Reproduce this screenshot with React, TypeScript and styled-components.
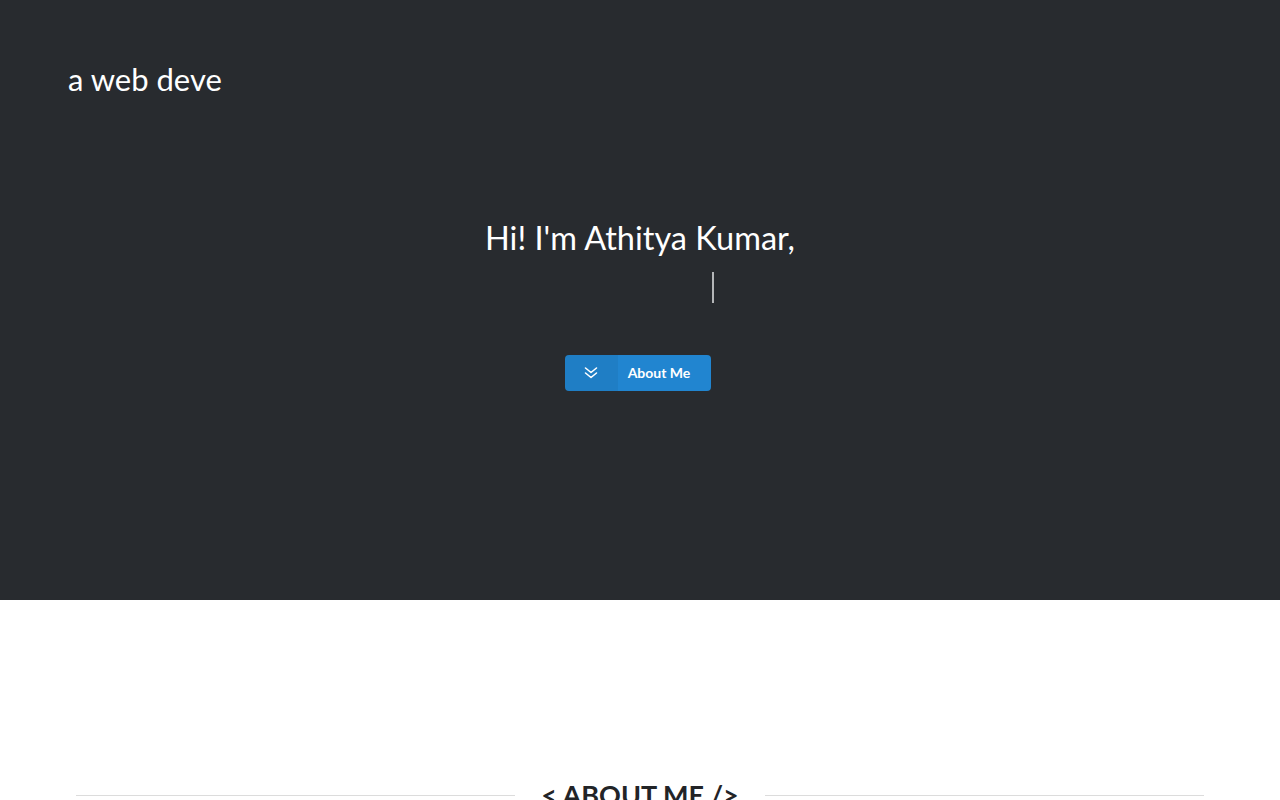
import React from 'react';
import styled, {createGlobalStyle} from 'styled-components';

const GlobalStyle = createGlobalStyle`
  html, body {
    margin: 0;
    padding: 0;
    background: #ffffff;
    font-family: Lato, "Helvetica Neue", Arial, sans-serif;
  }
`;

const Hero = styled.header`
  height: 600px;
  background: #282b2f;
  display: flex;
  flex-direction: column;
  color: #ffffff;
`;

const Brand = styled.div`
  padding: 59px 0 0 68px;
  font-size: 31px;
  line-height: 40px;
  font-weight: 400;
`;

const Intro = styled.div`
  margin-top: 117px;
  display: flex;
  flex-direction: column;
  align-items: center;
`;

const Greeting = styled.h1`
  margin: 0;
  font-size: 32.5px;
  font-weight: 400;
  line-height: 44px;
`;

const TypedLine = styled.div`
  height: 40px;
  margin-top: 7px;
  display: flex;
  justify-content: center;
  align-items: center;
`;

const Cursor = styled.span`
  display: block;
  width: 2px;
  height: 31px;
  margin-left: 146px;
  background: #b4b6b8;
`;

const AboutButton = styled.button`
  margin: 48px 4px 0 0;
  display: flex;
  align-items: stretch;
  height: 36px;
  padding: 0;
  border: none;
  border-radius: 4px;
  overflow: hidden;
  background: #2185d0;
  color: #ffffff;
  font-family: Lato, "Helvetica Neue", Arial, sans-serif;
  font-size: 14px;
  font-weight: 700;
  cursor: pointer;
`;

const ButtonIcon = styled.span`
  width: 53px;
  display: flex;
  align-items: center;
  justify-content: center;
  background: rgba(0, 0, 0, 0.05);
`;

const ButtonLabel = styled.span`
  display: flex;
  align-items: center;
  padding: 0 21px 2px 10px;
`;

const AboutSection = styled.section`
  padding: 177px 76px 0;
`;

const DividerHeader = styled.h2`
  margin: 0;
  display: flex;
  align-items: center;
  gap: 26px;
  font-size: 27px;
  line-height: 36px;
  font-weight: 700;
  color: #222427;
  white-space: nowrap;

  &::before, &::after {
    content: '';
    flex: 1;
    height: 1px;
    background: #dcdcdc;
  }
`;

const AngleDouble = () => (
  <svg width="14" height="14" viewBox="0 0 14 14" fill="none" stroke="#ffffff" strokeWidth="1.6" strokeLinecap="round" strokeLinejoin="round">
    <polyline points="1.5,2 7,6.5 12.5,2"/>
    <polyline points="1.5,7 7,11.5 12.5,7"/>
  </svg>
);

const App = (): JSX.Element => {
  return (
    <>
      <GlobalStyle/>
      <Hero>
        <Brand>a web deve</Brand>
        <Intro>
          <Greeting>Hi! I'm Athitya Kumar,</Greeting>
          <TypedLine>
            <Cursor/>
          </TypedLine>
          <AboutButton>
            <ButtonIcon><AngleDouble/></ButtonIcon>
            <ButtonLabel>About Me</ButtonLabel>
          </AboutButton>
        </Intro>
      </Hero>
      <AboutSection>
        <DividerHeader>&lt; ABOUT ME /&gt;</DividerHeader>
      </AboutSection>
    </>
  );
};

export default App;
